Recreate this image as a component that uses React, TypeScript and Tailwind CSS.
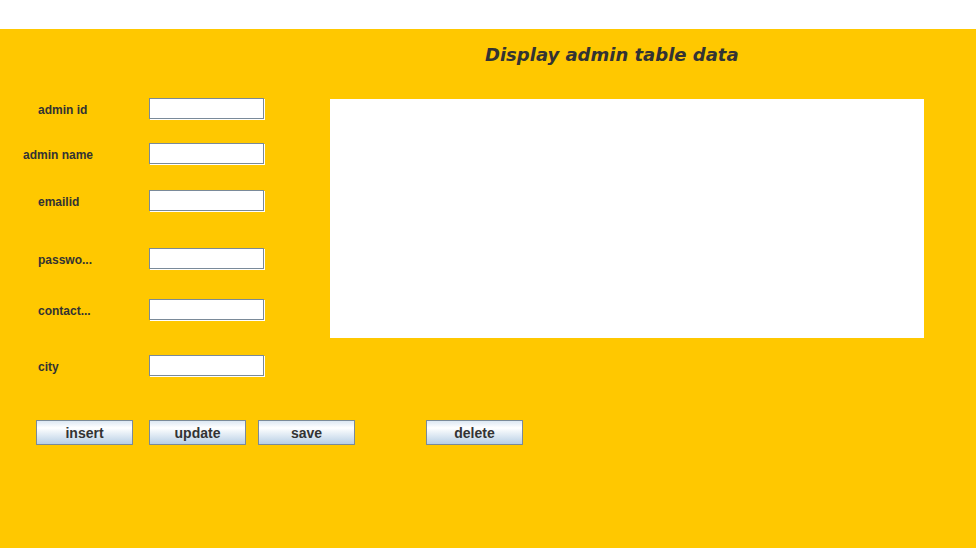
const fields = [
  { label: 'admin id', indent: 'pl-[38px] w-[149px]', gap: 'mt-0' },
  { label: 'admin name', indent: 'pl-[23px] w-[149px]', gap: 'mt-[23px]' },
  { label: 'emailid', indent: 'pl-[38px] w-[149px]', gap: 'mt-[25px]' },
  { label: 'passwo...', indent: 'pl-[38px] w-[149px]', gap: 'mt-[36px]' },
  { label: 'contact...', indent: 'pl-[38px] w-[149px]', gap: 'mt-[29px]' },
  { label: 'city', indent: 'pl-[38px] w-[149px]', gap: 'mt-[34px]' },
];

const buttons = [
  { text: 'insert', gap: 'ml-[36px]' },
  { text: 'update', gap: 'ml-[16px]' },
  { text: 'save', gap: 'ml-[12px]' },
  { text: 'delete', gap: 'ml-[71px]' },
];

const App = () => {
  return (
    <div className="w-[976px] h-[548px] flex flex-col bg-white overflow-hidden">
      {/* window title area */}
      <div className="h-[29px] bg-white" />

      <div className="flex-1 bg-[#ffc800] flex flex-col">
        <div className="h-[69px] pt-[14px] pl-[485px]">
          <h1 className="text-[18px] leading-[24px] font-bold italic text-[#333333] font-['DejaVu_Sans',sans-serif]">
            Display admin table data
          </h1>
        </div>

        <div className="flex items-start">
          {/* form */}
          <div className="w-[330px] flex flex-col">
            {fields.map((f) => (
              <div key={f.label} className={`flex items-center h-[22px] ${f.gap}`}>
                <span
                  className={`${f.indent} pt-[2px] text-[12px] font-bold text-[#333333] font-['Liberation_Sans',Arial,sans-serif] whitespace-nowrap`}
                >
                  {f.label}
                </span>
                <input
                  type="text"
                  className="w-[115px] h-[21px] self-start bg-white border border-[#7a8a99] shadow-[1px_1px_0_#ffffff] outline-none"
                />
              </div>
            ))}
          </div>

          {/* table */}
          <div className="w-[594px] h-[239px] mt-px bg-white" />
        </div>

        <div className="flex mt-[43px]">
          {buttons.map((b) => (
            <button
              key={b.text}
              className={`${b.gap} w-[97px] h-[25px] border border-[#7a8a99] bg-[linear-gradient(to_bottom,#dde8f3_0%,#ffffff_30%,#b8cfe5_100%)] text-[14px] font-bold text-[#333333] font-['Liberation_Sans',Arial,sans-serif] leading-none`}
            >
              {b.text}
            </button>
          ))}
        </div>
      </div>
    </div>
  );
};

export default App;
